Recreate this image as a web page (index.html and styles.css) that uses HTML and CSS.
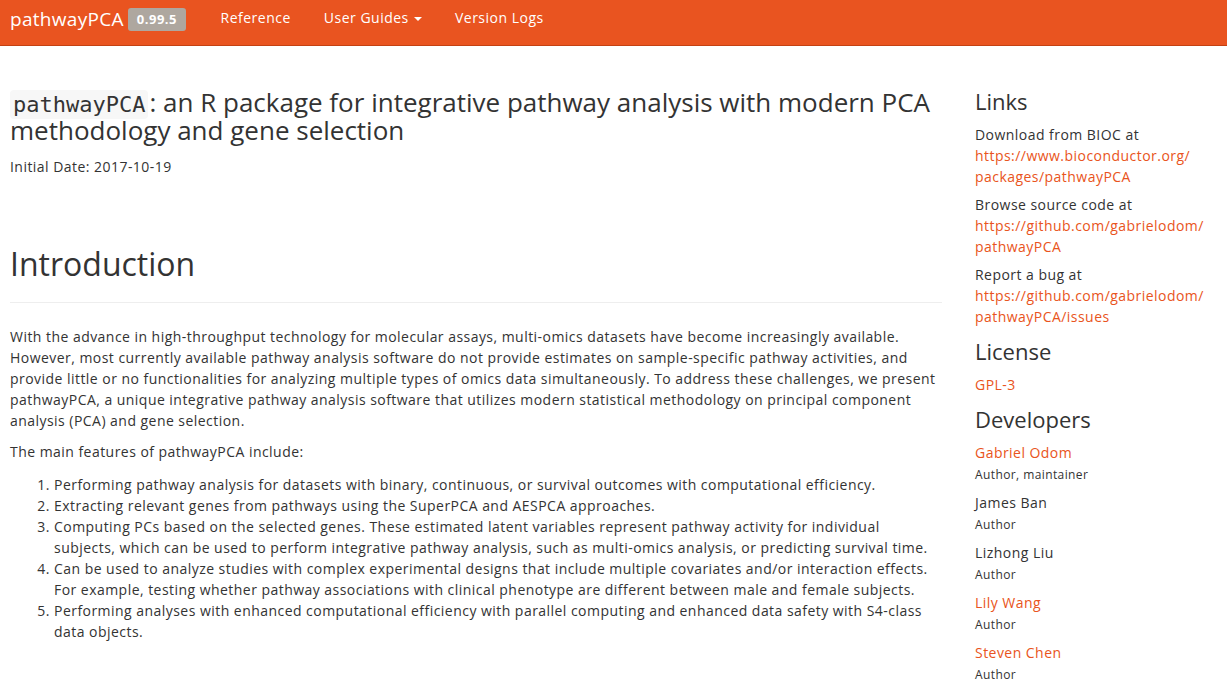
FILE: index.html
```html
<!DOCTYPE html>
<html lang="en">
<head>
<meta charset="utf-8">
<title>pathwayPCA</title>
<link rel="stylesheet" href="styles.css">
</head>
<body>
<header class="navbar">
  <div class="navbar-inner">
    <a class="brand" href="#">pathwayPCA</a>
    <span class="version">0.99.5</span>
    <nav class="nav">
      <a href="#">Reference</a>
      <a href="#">User Guides <span class="caret"></span></a>
      <a href="#">Version Logs</a>
    </nav>
  </div>
</header>

<div class="page">
  <main class="contents">
    <h1 class="title"><code>pathwayPCA</code>: an R package for integrative pathway analysis with modern PCA methodology and gene selection</h1>
    <p class="date">Initial Date: 2017-10-19</p>

    <div class="page-header">
      <h1>Introduction</h1>
    </div>
    <p>With the advance in high-throughput technology for molecular assays, multi-omics datasets have become increasingly available. However, most currently available pathway analysis software do not provide estimates on sample-specific pathway activities, and provide little or no functionalities for analyzing multiple types of omics data simultaneously. To address these challenges, we present pathwayPCA, a unique integrative pathway analysis software that utilizes modern statistical methodology on principal component analysis (PCA) and gene selection.</p>
    <p>The main features of pathwayPCA include:</p>
    <ol>
      <li>Performing pathway analysis for datasets with binary, continuous, or survival outcomes with computational efficiency.</li>
      <li>Extracting relevant genes from pathways using the SuperPCA and AESPCA approaches.</li>
      <li>Computing PCs based on the selected genes. These estimated latent variables represent pathway activity for individual subjects, which can be used to perform integrative pathway analysis, such as multi-omics analysis, or predicting survival time.</li>
      <li>Can be used to analyze studies with complex experimental designs that include multiple covariates and/or interaction effects. For example, testing whether pathway associations with clinical phenotype are different between male and female subjects.</li>
      <li>Performing analyses with enhanced computational efficiency with parallel computing and enhanced data safety with S4-class data objects.</li>
    </ol>
  </main>

  <aside class="sidebar">
    <h2>Links</h2>
    <ul class="list">
      <li>Download from BIOC at <br><a href="#">https://www.bioconductor.org/<wbr>packages/pathwayPCA</a></li>
      <li>Browse source code at <br><a href="#">https://github.com/gabrielodom/<wbr>pathwayPCA</a></li>
      <li>Report a bug at <br><a href="#">https://github.com/gabrielodom/<wbr>pathwayPCA/issues</a></li>
    </ul>
    <h2>License</h2>
    <ul class="list">
      <li><a href="#">GPL-3</a></li>
    </ul>
    <h2>Developers</h2>
    <ul class="list devs">
      <li><a href="#">Gabriel Odom</a><br><small class="roles">Author, maintainer</small></li>
      <li>James Ban <br><small class="roles">Author</small></li>
      <li>Lizhong Liu <br><small class="roles">Author</small></li>
      <li><a href="#">Lily Wang</a><br><small class="roles">Author</small></li>
      <li><a href="#">Steven Chen</a><br><small class="roles">Author</small></li>
    </ul>
  </aside>
</div>
</body>
</html>
```

FILE: styles.css
```css
* { box-sizing: border-box; }

html, body {
  margin: 0;
  padding: 0;
}

body {
  font-family: "Open Sans", "Noto Sans", sans-serif;
  font-size: 14px;
  line-height: 21px;
  letter-spacing: 0.46px;
  color: #333333;
  background: #ffffff;
}

a {
  color: #e95420;
  text-decoration: none;
}

.navbar {
  background: #e95420;
  border-bottom: 1px solid #c34113;
  height: 46px;
}

.navbar-inner {
  display: flex;
  align-items: center;
  height: 45px;
  padding: 0 10px;
}

.brand {
  color: #ffffff;
  font-size: 19px;
  letter-spacing: 0.3px;
  line-height: 20px;
  margin-top: -8px;
}

.version {
  display: inline-block;
  margin-left: 4px;
  background: #aea79f;
  color: #ffffff;
  font-weight: 700;
  font-size: 13px;
  letter-spacing: 0.5px;
  line-height: 23px;
  height: 23px;
  padding: 0 9px;
  border-radius: 3px;
  margin-top: -6px;
}

.nav {
  display: flex;
  margin-left: 18px;
}

.nav a {
  color: #ffffff;
  font-size: 14px;
  letter-spacing: 0.5px;
  padding: 0 16.5px;
  line-height: 20px;
  margin-top: -9px;
}

.caret {
  display: inline-block;
  width: 0;
  height: 0;
  margin-left: 1px;
  vertical-align: middle;
  border-top: 4px solid #ffffff;
  border-left: 4px solid transparent;
  border-right: 4px solid transparent;
}

.page {
  display: flex;
  padding: 0 10px;
  gap: 33px;
}

.contents {
  width: 932px;
  flex: none;
}

.sidebar {
  flex: 1;
  padding-top: 43px;
}

h1, h2 {
  font-weight: 400;
  letter-spacing: 0;
  margin: 0;
}

.title {
  font-size: 26px;
  line-height: 28px;
  margin-top: 42px;
}

.title code {
  font-family: "DejaVu Sans Mono", monospace;
  font-size: 22px;
  line-height: 1;
  background: #f7f7f7;
  border-radius: 4px;
  padding: 2px 3px;
  margin-right: 1px;
}

.date {
  margin: 12px 0 0;
}

.page-header {
  margin-top: 68px;
  padding-bottom: 19px;
  border-bottom: 1px solid #eeeeee;
  margin-bottom: 23px;
}

.page-header h1 {
  font-size: 32px;
  line-height: 38px;
}

p {
  margin: 0 0 10px;
}

ol {
  margin: 12px 0 0;
  padding-left: 44px;
  padding-right: 8px;
}

.sidebar h2 {
  font-size: 22px;
  line-height: 24px;
  margin-bottom: 11px;
}

.list {
  list-style: none;
  padding: 0;
  margin: 0 0 12px;
}

.list li {
  margin-bottom: 7px;
}

.roles {
  font-size: 12px;
  letter-spacing: 0.4px;
  line-height: 21px;
}
```
